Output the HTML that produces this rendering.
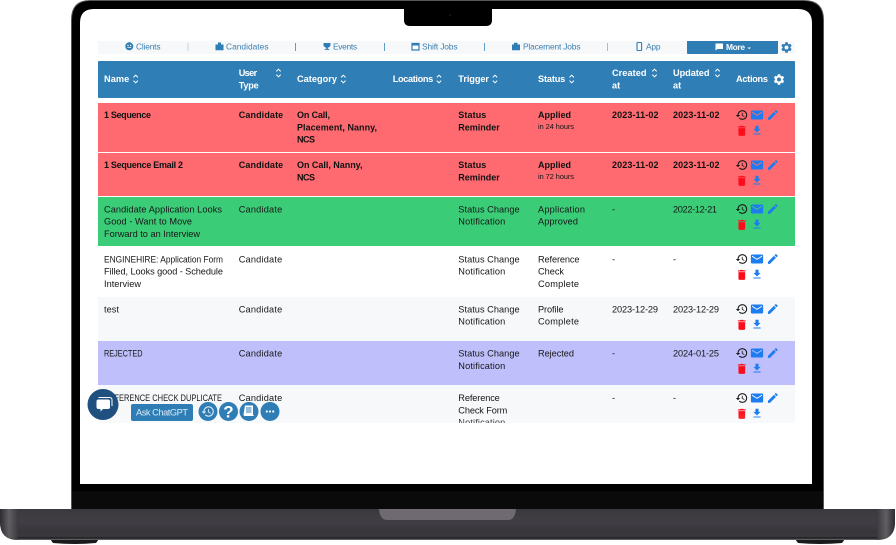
<!DOCTYPE html>
<html><head><meta charset="utf-8"><title>Trigger list</title>
<style>
html,body{margin:0;padding:0;background:#fff;width:896px;height:545px;overflow:hidden}
svg{display:block}
text{font-family:"Liberation Sans",Arial,sans-serif;font-size:9.2px;fill:#161616}
.b{font-weight:bold;fill:#111;font-size:9px}
.h{font-weight:bold;fill:#fff;font-size:9.2px}
.n{fill:#3c7fb1;font-size:8.4px}
.s{font-size:7.6px}
</style></head><body>
<svg width="896" height="545" viewBox="0 0 896 545" xmlns="http://www.w3.org/2000/svg">
<defs>
<linearGradient id="base" x1="0" y1="0" x2="0" y2="1"><stop offset="0" stop-color="#3c3a3e"/><stop offset=".45" stop-color="#413d44"/><stop offset=".75" stop-color="#37343a"/><stop offset=".88" stop-color="#3c393f"/><stop offset=".94" stop-color="#1d1c1f"/><stop offset="1" stop-color="#77767a"/></linearGradient>
<linearGradient id="edgeL" x1="0" y1="0" x2="1" y2="0"><stop offset="0" stop-color="#2a282c"/><stop offset=".5" stop-color="#6a666c"/><stop offset="1" stop-color="#3c3a3e"/></linearGradient>
<linearGradient id="edgeR" x1="0" y1="0" x2="1" y2="0"><stop offset="0" stop-color="#3c3a3e"/><stop offset=".5" stop-color="#6a666c"/><stop offset="1" stop-color="#2a282c"/></linearGradient>
<linearGradient id="fade" x1="0" y1="0" x2="0" y2="1"><stop offset="0" stop-color="#fff" stop-opacity="0"/><stop offset="1" stop-color="#fff" stop-opacity=".2"/></linearGradient>
<clipPath id="clip7"><rect x="98" y="385" width="697" height="38"/></clipPath>
<symbol id="hist" viewBox="0 0 24 24"><path d="M13 3a9 9 0 0 0-9 9H1l3.89 3.89.07.14L9 12H6c0-3.87 3.13-7 7-7s7 3.13 7 7-3.13 7-7 7c-1.93 0-3.68-.79-4.94-2.06l-1.42 1.42A8.954 8.954 0 0 0 13 21a9 9 0 0 0 0-18zm-1 5v5l4.28 2.54.72-1.21-3.5-2.08V8H12z"/></symbol>
<symbol id="mail" viewBox="0 0 24 24"><path d="M21 4H3c-1.1 0-2 .9-2 2v12c0 1.100.9 2 2 2h18c1.100 0 2-.9 2-2V6c0-1.100-.9-2-2-2zm0 4l-9 5.500L3 8V6l9 5.500L21 6v2z"/></symbol>
<symbol id="pen" viewBox="0 0 24 24"><path d="M3 17.250V21h3.750L17.810 9.940l-3.750-3.750L3 17.250zM20.710 7.040a1 1 0 0 0 0-1.410l-2.340-2.340a1 1 0 0 0-1.410 0l-1.830 1.830 3.750 3.750 1.830-1.830z"/></symbol>
<symbol id="del" viewBox="0 0 24 24"><path d="M6 19c0 1.100.9 2 2 2h8c1.100 0 2-.9 2-2V7H6v12zM19 4h-3.500l-1-1h-5l-1 1H5v2h14V4z"/></symbol>
<symbol id="dl" viewBox="0 0 24 24"><path d="M19 9h-4V3H9v6H5l7 7 7-7zM5 18v2h14v-2H5z"/></symbol>
<symbol id="gear" viewBox="0 0 24 24"><path d="M19.14 12.94c.04-.3.06-.61.06-.94 0-.32-.02-.64-.07-.94l2.03-1.58a.49.49 0 0 0 .12-.61l-1.92-3.32a.488.488 0 0 0-.59-.22l-2.39.96c-.5-.38-1.03-.7-1.62-.94l-.36-2.54a.484.484 0 0 0-.48-.41h-3.84c-.24 0-.43.17-.47.41l-.36 2.54c-.59.24-1.13.57-1.62.94l-2.39-.96c-.22-.08-.47 0-.59.22L2.74 8.87c-.12.21-.08.47.12.61l2.03 1.58c-.05.3-.09.63-.09.94s.02.64.07.94l-2.03 1.58a.49.49 0 0 0-.12.61l1.92 3.32c.12.22.37.29.59.22l2.39-.96c.5.38 1.03.7 1.62.94l.36 2.54c.05.24.24.41.48.41h3.84c.24 0 .44-.17.47-.41l.36-2.54c.59-.24 1.13-.56 1.62-.94l2.39.96c.22.08.47 0 .59-.22l1.92-3.32c.12-.22.07-.47-.12-.61l-2.01-1.58zM12 15.6A3.6 3.6 0 1 1 12 8.4a3.6 3.6 0 0 1 0 7.2z"/></symbol>
<g id="sort"><path d="M-2.2-1.6L0-3.8 2.2-1.6M-2.2 1.6L0 3.8 2.2 1.6" fill="none" stroke="#fff" stroke-width="1"/></g>
<g id="acts">
<use href="#hist" x="-.7" y="-6.5" width="13" height="13" fill="#151515"/>
<use href="#mail" x="14.300" y="-6.7" width="13.400" height="13.400" fill="#1c7cf0"/>
<use href="#pen" x="30.300" y="-6.5" width="13" height="13" fill="#1c7cf0"/>
<use href="#del" x="-.9" y="9.200" width="13.400" height="13.400" fill="#fb0d1b"/>
<use href="#dl" x="14.800" y="9.200" width="12.400" height="12.400" fill="#1c7cf0"/>
</g>
</defs>

<!-- laptop lid -->
<path d="M90 .5H804Q823.500 .5 823.500 20V509H71.500V20Q71.500 .5 90 .5Z" fill="#000" stroke="#57565a" stroke-width="1"/>
<rect x="72" y="491" width="751" height="18" fill="#0a0a0b"/>
<path d="M94 9H798Q812 9 812 23V484H80V23Q80 9 94 9Z" fill="#fff"/>
<path d="M404 9H492V20Q492 26 486 26H410Q404 26 404 20Z" fill="#000"/>
<circle cx="450" cy="15" r="1" fill="#10182c"/>

<!-- base -->
<path d="M50 539H99L96 543Q75 545 53 543Z" fill="#1a191b"/>
<path d="M795 539H845L842 543Q820 545 798 543Z" fill="#1a191b"/>
<path d="M0 509H895V522Q895 540 877 540H18Q0 540 0 522Z" fill="url(#base)"/>
<path d="M0 509H18V540Q0 540 0 522Z" fill="url(#edgeL)" opacity=".8"/>
<path d="M877 509H895V522Q895 540 877 540Z" fill="url(#edgeR)" opacity=".8"/>
<path d="M379 509H516Q515 520 508 520H387Q380 520 379 509Z" fill="#6f6a72"/>

<!-- nav -->
<rect x="98" y="41" width="697" height="13" fill="#f6f8fa"/>
<rect x="187.500" y="43" width="1" height="8" fill="#bcd4e6"/><rect x="295" y="43" width="1" height="8" fill="#5f9cc8"/><rect x="384" y="43" width="1" height="8" fill="#5f9cc8"/><rect x="484" y="43" width="1" height="8" fill="#5f9cc8"/><rect x="607" y="43" width="1" height="8" fill="#9cc0da"/>
<circle cx="129.300" cy="46.300" r="4" fill="#2f7db5"/><circle cx="128" cy="45.500" r=".7" fill="#fff"/><circle cx="130.600" cy="45.500" r=".7" fill="#fff"/><path d="M127.300 47.300h4v.7h-4z" fill="#fff"/>
<text class="n" x="136" y="49.700" textLength="24.500">Clients</text>
<path d="M215.500 44.500h2.500v-2h3v2h2.500v5.800h-8z" fill="#2f7db5"/>
<text class="n" x="226" y="49.700" textLength="42.500">Candidates</text>
<path d="M323.500 43h7v1.800q0 2.300-2.700 2.900v1.200h1.500v1h-4.600v-1h1.500v-1.200q-2.700-.6-2.700-2.900z" fill="#2f7db5"/>
<text class="n" x="333" y="49.700" textLength="24">Events</text>
<path d="M412 43.500h7v6.500h-7z" fill="#fff" stroke="#2f7db5" stroke-width="1.200"/><rect x="412" y="43" width="7" height="2.500" fill="#2f7db5"/>
<text class="n" x="422" y="49.700" textLength="35.500">Shift Jobs</text>
<path d="M512 44.500h2v-1.800h3.500v1.800h2.500v5.800h-8z" fill="#2f7db5"/>
<text class="n" x="523" y="49.700" textLength="57.500">Placement Jobs</text>
<rect x="637" y="42.500" width="4.600" height="8" rx=".8" fill="none" stroke="#2f7db5" stroke-width="1.100"/>
<text class="n" x="646" y="49.700" textLength="14.500">App</text>
<path d="M687 41H778V53Q778 54 777 54H688Q687 54 687 53Z" fill="#2f7db5"/>
<path d="M715.500 43.500h7.500v5.500h-5.500l-2 1.500z" fill="#fff"/>
<text class="h" style="font-size:8.400px" x="726" y="49.800" textLength="19">More</text>
<path d="M747.500 47.500h3.400l-1.700 1.700z" fill="#fff"/>
<use href="#gear" x="780" y="41" width="13" height="13" fill="#2f7db5"/>

<!-- header -->
<rect x="98" y="61" width="697" height="37" rx="1" fill="#2f7eb6"/>
<text class="h" x="104" y="82" textLength="25.300">Name</text><use href="#sort" x="135.700" y="79"/>
<text class="h" x="238.700" y="76" textLength="18.500">User</text><text class="h" x="238.700" y="88.500" textLength="20">Type</text><use href="#sort" x="278.500" y="73"/>
<text class="h" x="297" y="82" textLength="40">Category</text><use href="#sort" x="343.300" y="79"/>
<text class="h" x="392.700" y="82" textLength="40.500">Locations</text><use href="#sort" x="439" y="79"/>
<text class="h" x="458.300" y="82" textLength="30.700">Trigger</text><use href="#sort" x="495" y="79"/>
<text class="h" x="538" y="82" textLength="27.300">Status</text><use href="#sort" x="571.700" y="79"/>
<text class="h" x="612" y="76" textLength="34.500">Created</text><text class="h" x="612" y="88.500">at</text><use href="#sort" x="654.500" y="73"/>
<text class="h" x="673" y="76" textLength="36.500">Updated</text><text class="h" x="673" y="88.500">at</text><use href="#sort" x="717.500" y="73"/>
<text class="h" x="736" y="82" textLength="32">Actions</text><use href="#gear" x="772.500" y="73" width="13" height="13" fill="#fff"/>

<!-- rows bg -->
<rect x="98" y="103" width="697" height="49" fill="#fe6a70"/>
<rect x="98" y="153" width="697" height="43" fill="#fe6a70"/>
<rect x="98" y="197" width="697" height="49" fill="#3bcc78"/>
<rect x="98" y="297" width="697" height="44" fill="#f7f8fa"/>
<rect x="98" y="341" width="697" height="44" fill="#bfc0fb"/>
<rect x="98" y="385" width="697" height="38" fill="#f7f8fa"/>

<!-- row 1 -->
<text class="b" x="104" y="118" textLength="47">1 Sequence</text>
<text class="b" x="238.700" y="118" textLength="44.500">Candidate</text>
<text class="b" x="297" y="118" textLength="33">On Call,</text>
<text class="b" x="297" y="130.300" textLength="80">Placement, Nanny,</text>
<text class="b" x="297" y="142.700" textLength="18">NCS</text>
<text class="b" x="458.300" y="118" textLength="28">Status</text>
<text class="b" x="458.300" y="130.300" textLength="41.500">Reminder</text>
<text class="b" x="538" y="118" textLength="33">Applied</text>
<text class="s" x="538" y="129" textLength="36">in 24 hours</text>
<text class="b" x="612" y="118" textLength="46.500">2023-11-02</text>
<text class="b" x="673" y="118" textLength="46.500">2023-11-02</text>
<use href="#acts" x="736" y="115"/>
<!-- row 2 -->
<text class="b" x="104" y="168" textLength="79">1 Sequence Email 2</text>
<text class="b" x="238.700" y="168" textLength="44.500">Candidate</text>
<text class="b" x="297" y="168" textLength="65.500">On Call, Nanny,</text>
<text class="b" x="297" y="180.300" textLength="18">NCS</text>
<text class="b" x="458.300" y="168" textLength="28">Status</text>
<text class="b" x="458.300" y="180.300" textLength="41.500">Reminder</text>
<text class="b" x="538" y="168" textLength="33">Applied</text>
<text class="s" x="538" y="179" textLength="36">in 72 hours</text>
<text class="b" x="612" y="168" textLength="46.500">2023-11-02</text>
<text class="b" x="673" y="168" textLength="46.500">2023-11-02</text>
<use href="#acts" x="736" y="165"/>
<!-- row 3 -->
<text x="104" y="212.300" textLength="118">Candidate Application Looks</text>
<text x="104" y="224.700" textLength="88">Good - Want to Move</text>
<text x="104" y="237" textLength="96">Forward to an Interview</text>
<text x="238.700" y="212.300" textLength="43.500">Candidate</text>
<text x="458.300" y="212.300" textLength="61.300">Status Change</text>
<text x="458.300" y="224.700" textLength="47">Notification</text>
<text x="538" y="212.300" textLength="47">Application</text>
<text x="538" y="224.700" textLength="40">Approved</text>
<text x="612" y="212.300">-</text>
<text x="673" y="212.300" textLength="44">2022-12-21</text>
<use href="#acts" x="736" y="209"/>
<!-- row 4 -->
<text x="104" y="262.300" textLength="119" lengthAdjust="spacingAndGlyphs">ENGINEHIRE: Application Form</text>
<text x="104" y="274.700" textLength="119">Filled, Looks good - Schedule</text>
<text x="104" y="287" textLength="37">Interview</text>
<text x="238.700" y="262.300" textLength="43.500">Candidate</text>
<text x="458.300" y="262.300" textLength="61.300">Status Change</text>
<text x="458.300" y="274.700" textLength="47">Notification</text>
<text x="538" y="262.300" textLength="41.500">Reference</text>
<text x="538" y="274.700" textLength="26">Check</text>
<text x="538" y="287" textLength="41">Complete</text>
<text x="612" y="262.300">-</text>
<text x="673" y="262.300">-</text>
<use href="#acts" x="736" y="259"/>
<!-- row 5 -->
<text x="104" y="312.300" textLength="15">test</text>
<text x="238.700" y="312.300" textLength="43.500">Candidate</text>
<text x="458.300" y="312.300" textLength="61.300">Status Change</text>
<text x="458.300" y="324.700" textLength="47">Notification</text>
<text x="538" y="312.300" textLength="25.500">Profile</text>
<text x="538" y="324.700" textLength="41">Complete</text>
<text x="612" y="312.300" textLength="46">2023-12-29</text>
<text x="673" y="312.300" textLength="46">2023-12-29</text>
<use href="#acts" x="736" y="309"/>
<!-- row 6 -->
<text x="104" y="356.700" textLength="38.500" lengthAdjust="spacingAndGlyphs">REJECTED</text>
<text x="238.700" y="356.700" textLength="43.500">Candidate</text>
<text x="458.300" y="356.700" textLength="61.300">Status Change</text>
<text x="458.300" y="369" textLength="47">Notification</text>
<text x="538" y="356.700" textLength="36">Rejected</text>
<text x="612" y="356.700">-</text>
<text x="673" y="356.700" textLength="46">2024-01-25</text>
<use href="#acts" x="736" y="353"/>
<!-- row 7 -->
<g clip-path="url(#clip7)">
<text x="104" y="401" textLength="118" lengthAdjust="spacingAndGlyphs">REFERENCE CHECK DUPLICATE</text>
<text x="238.700" y="401" textLength="43.500">Candidate</text>
<text x="458.300" y="401" textLength="41.500">Reference</text>
<text x="458.300" y="413.300" textLength="49">Check Form</text>
<text x="458.300" y="425.600" textLength="47">Notification</text>
<text x="612" y="401">-</text>
<text x="673" y="401">-</text>
<use href="#acts" x="736" y="398"/>
</g>
<rect x="98" y="412" width="697" height="11" fill="url(#fade)"/>

<!-- floating widgets -->
<circle cx="103" cy="404.500" r="15.500" fill="#1f5080"/>
<path d="M98.500 397.500h11q2.500 0 2.500 2.500v6" fill="none" stroke="#fff" stroke-width="1"/>
<path d="M96.500 399.500h11.500q2 0 2 2v5.500q0 2-2 2h-5l-2.500 2.500v-2.500h-2q-2 0-2-2v-5.500q0-2 2-2z" fill="#fff"/>
<rect x="131" y="404" width="62" height="17" rx="2" fill="#2f7db5"/>
<text x="136" y="415.300" textLength="52" style="fill:#dcebf6;font-size:9.200px">Ask ChatGPT</text>
<circle cx="208" cy="411.500" r="9.500" fill="#2f7db5"/>
<use href="#hist" x="201" y="404.500" width="14" height="14" fill="#dcebf6"/>
<circle cx="228.500" cy="411.500" r="9.500" fill="#2f7db5"/>
<text x="228.500" y="417.500" text-anchor="middle" style="fill:#fff;font-size:17px;font-weight:bold">?</text>
<circle cx="249" cy="411.500" r="9.500" fill="#2f7db5"/>
<path d="M245 405.500h8v9l1 1.500h-9q-1.500 0-1.500-1.500z" fill="#fff"/><path d="M246 408h5.500M246 410h5.500M246 412h5.500" stroke="#2f7db5" stroke-width=".9"/>
<circle cx="270" cy="411.500" r="9.500" fill="#2f7db5"/>
<circle cx="266.800" cy="411.500" r="1.100" fill="#fff"/><circle cx="270" cy="411.500" r="1.100" fill="#fff"/><circle cx="273.200" cy="411.500" r="1.100" fill="#fff"/>
</svg>
</body></html>
